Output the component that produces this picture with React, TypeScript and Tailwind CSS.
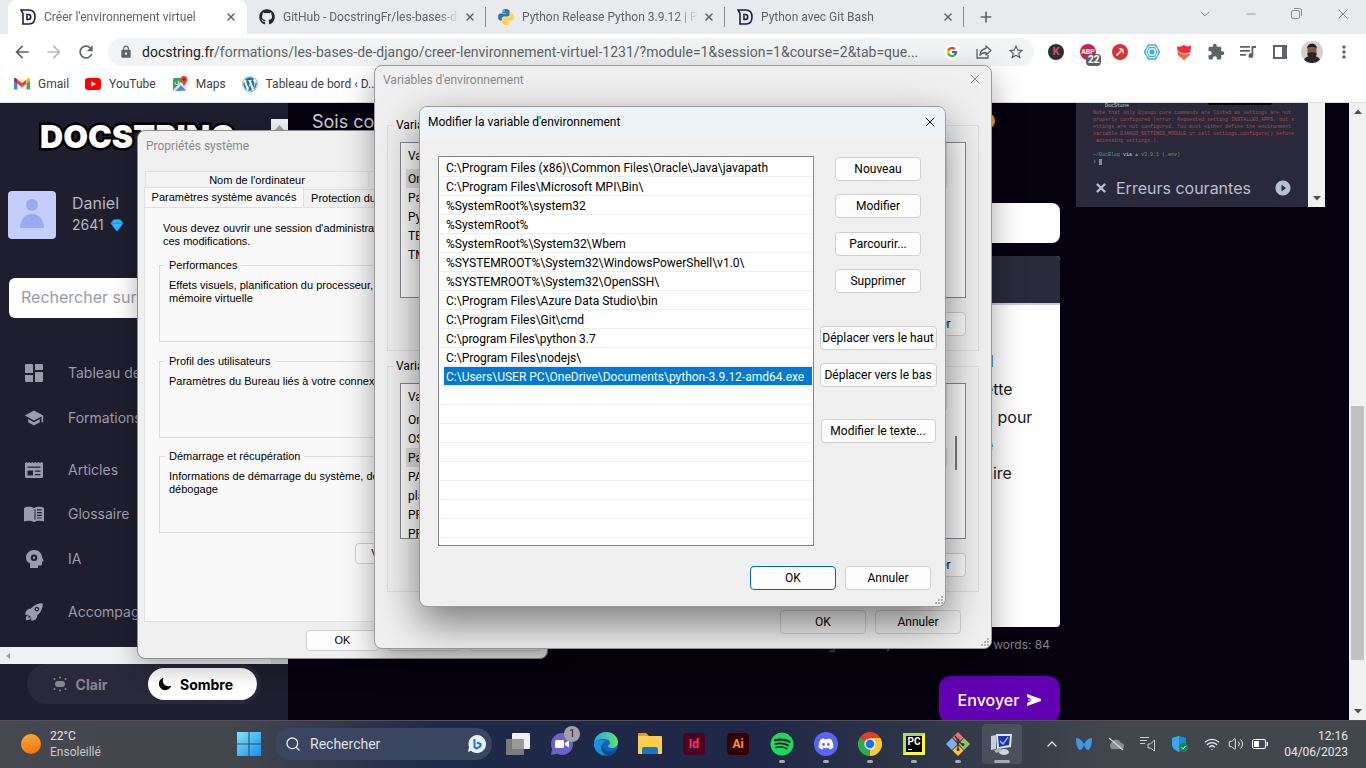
import React from "react";
import clsx from "clsx";
import { FcGoogle } from "react-icons/fc";
import { FaGithub, FaWordpress, FaSpotify, FaDiscord } from "react-icons/fa";
import {
  MdArrowBack,
  MdArrowForward,
  MdRefresh,
  MdLock,
  MdStarBorder,
  MdExtension,
  MdSchool,
  MdPlayCircleFilled,
  MdMoreVert,
} from "react-icons/md";
import { IoRocket, IoMoon } from "react-icons/io5";
import { Minus, Plus, Search, X, ChevronDown, ChevronUp, Wifi, Volume2, Gem } from "lucide-react";

type Tab = {
  title: string;
  icon: React.ReactNode;
  active?: boolean;
};

const pathEntries = [
  "C:\\Program Files (x86)\\Common Files\\Oracle\\Java\\javapath",
  "C:\\Program Files\\Microsoft MPI\\Bin\\",
  "%SystemRoot%\\system32",
  "%SystemRoot%",
  "%SystemRoot%\\System32\\Wbem",
  "%SYSTEMROOT%\\System32\\WindowsPowerShell\\v1.0\\",
  "%SYSTEMROOT%\\System32\\OpenSSH\\",
  "C:\\Program Files\\Azure Data Studio\\bin",
  "C:\\Program Files\\Git\\cmd",
  "C:\\program Files\\python 3.7",
  "C:\\Program Files\\nodejs\\",
  "C:\\Users\\USER PC\\OneDrive\\Documents\\python-3.9.12-amd64.exe",
];

const userVars = ["OneDrive", "Path", "PyCharm", "TEMP", "TMP"];
const systemVars = ["OnlineServices", "OS", "Path", "PATHEXT", "platformcode", "PROCESSOR_ARCHITECTURE", "PROCESSOR_IDENTIFIER"];

/* ---------- Small drawings ---------- */

function DocstringIcon() {
  return (
    <svg viewBox="0 0 16 16" className="h-4 w-4 shrink-0" fill="none" stroke="#221a4a" strokeWidth="1.6">
      <path d="M1 1h8c4 0 6 3 6 7s-2 7-6 7H3V4.500z" />
      <path d="M6 5.500h2.500c1.500 0 2.200 1 2.200 2.500s-.7 2.500-2.200 2.500H7V6.500" />
    </svg>
  );
}

function PythonIcon() {
  return (
    <svg viewBox="0 0 16 16" className="h-4 w-4 shrink-0">
      <path fill="#3776ab" d="M7.900 0C4.700 0 4.500 1.400 4.500 2.200v1.700h3.700v.6H2.600C1 4.500 0 5.700 0 8s1 3.500 2.300 3.500h1.500V9.600c0-1.200 1-2.200 2.200-2.200h3.800c1 0 1.800-.8 1.800-1.800V2.200C11.600 1 10.400 0 7.900 0zM6 1.300a.7.7 0 110 1.400.7.7 0 010-1.400z" />
      <path fill="#ffd43b" d="M8.100 16c3.200 0 3.400-1.400 3.400-2.200v-1.700H7.800v-.6h5.600C15 11.500 16 10.300 16 8s-1-3.500-2.300-3.500h-1.500v1.900c0 1.200-1 2.200-2.200 2.200H6.200c-1 0-1.800.8-1.800 1.800v3.400C4.400 15 5.600 16 8.100 16zm1.900-1.300a.7.7 0 110-1.400.7.7 0 010 1.400z" />
    </svg>
  );
}

function GmailIcon() {
  return (
    <svg viewBox="0 0 16 12" className="w-4 shrink-0">
      <path fill="#4285f4" d="M0 1.500V11.500h3.500V5z" />
      <path fill="#34a853" d="M16 1.500V11.500h-3.500V5z" />
      <path fill="#ea4335" d="M3.500 1.400L8 4.900l4.500-3.500V5.700L8 9.200 3.500 5.700z" />
      <path fill="#c5221f" d="M0 1.500C0 .2 1.400-.3 2.400.5l1.100.9v4.300L0 3z" />
      <path fill="#fbbc04" d="M16 1.500C16 .2 14.600-.3 13.600.5l-1.100.9v4.300L16 3z" />
    </svg>
  );
}

function YoutubeIcon() {
  return (
    <svg viewBox="0 0 16 12" className="w-4 shrink-0">
      <rect width="16" height="12" rx="3" fill="#f00" />
      <path d="M6.300 3.300v5.400L11 6z" fill="#fff" />
    </svg>
  );
}

function MapsIcon() {
  return (
    <svg viewBox="0 0 16 16" className="h-4 w-4 shrink-0">
      <rect x="1" y="2" width="13" height="13" rx="1.500" fill="#34a853" />
      <path d="M1 14L12 3l2 2v10H2z" fill="#dbe3e8" />
      <path d="M3.500 15L9 9.500l5 5z" fill="#4285f4" />
      <path d="M3 6.500a2 2 0 103-1.700" stroke="#fff" fill="none" />
      <path d="M12 0a3.500 3.500 0 00-3.500 3.500C8.500 6 11 7 12 10.500 13 7 15.500 6 15.500 3.500A3.500 3.500 0 0012 0z" fill="#ea4335" />
      <circle cx="12" cy="3.500" r="1.200" fill="#8c1d18" />
    </svg>
  );
}

function ShareIcon() {
  return (
    <svg viewBox="0 0 16 16" className="h-4 w-4" fill="none" stroke="#5f6368" strokeWidth="1.300">
      <path d="M1 5v9h11v-3" />
      <path d="M10 2l5 4.500-5 4.500V8.500C7 8.500 5.200 9.300 3.800 11.300 4.200 7.700 6.500 5 10 4.500z" strokeLinejoin="round" />
    </svg>
  );
}

function DashboardIcon({ className }: { className?: string }) {
  return (
    <svg viewBox="0 0 20 20" className={className} fill="currentColor">
      <path d="M2 1h6a1 1 0 011 1v8H1V2a1 1 0 011-1zM1 12h8v7H2a1 1 0 01-1-1zM11 1h7a1 1 0 011 1v5h-8zM11 9h8v9a1 1 0 01-1 1h-7z" />
    </svg>
  );
}

function ArticleIcon({ className }: { className?: string }) {
  return (
    <svg viewBox="0 0 20 20" className={className} fill="currentColor" fillRule="evenodd">
      <path d="M1 3l1.500-1L4 3l1.500-1L7 3l1.500-1L10 3l1.500-1L13 3l1.500-1L16 3l1.500-1L19 3v13.500a1.500 1.500 0 01-1.500 1.500h-15A1.500 1.500 0 011 16.500zM3.500 6.500v1.300h13V6.500zM3.500 10.500v5H9v-5zM11 10.500v1.300h5.500v-1.300zM11 14v1.300h5.500V14z" />
    </svg>
  );
}

function GlossaryIcon({ className }: { className?: string }) {
  return (
    <svg viewBox="0 0 20 20" className={className} fill="currentColor" fillRule="evenodd">
      <path d="M0 4c2.500-1.800 7-1.800 10 0 3-1.800 7.500-1.800 10 0v13.500c-2.500-1-7-1.200-10 .5-3-1.700-7.500-1.500-10-.5zM10.500 5.300v10.500h1V5zM13 5.300v1.200h4.800V5.300zM13 8v1.200h4.800V8zM13 10.700v1.200h4.800v-1.200zM13 13.400v1.200h4.800v-1.200z" />
    </svg>
  );
}

function HeadIcon({ className }: { className?: string }) {
  return (
    <svg viewBox="0 0 20 20" className={className} fill="currentColor" fillRule="evenodd">
      <path d="M10 1c5 0 8 3.500 8 7l1.500 3.500c.2.600-.2 1-.7 1H18V15a1.500 1.500 0 01-1.500 1.500H14V19H6v-4.500C3 13 2 11 2 8.500 2 4 6 1 10 1zM10 5.500a3.200 3.200 0 100 6.400 3.200 3.200 0 000-6.400zM10 7.500a1.200 1.200 0 110 2.400 1.200 1.200 0 010-2.400z" />
    </svg>
  );
}

function ResizeGrip() {
  return (
    <svg viewBox="0 0 8 8" className="absolute right-0.5 bottom-0.5 h-2 w-2" fill="#b4b4b4">
      <path d="M6 0h2v2H6zM3 3h2v2H3zM6 3h2v2H6zM0 6h2v2H0zM3 6h2v2H3zM6 6h2v2H6z" />
    </svg>
  );
}

/* ---------- Browser chrome ---------- */

const tabs: Tab[] = [
  { title: "Créer l'environnement virtuel", icon: <DocstringIcon />, active: true },
  { title: "GitHub - DocstringFr/les-bases-de-django", icon: <FaGithub className="h-4 w-4 shrink-0 text-[#24292f]" /> },
  { title: "Python Release Python 3.9.12 | Python.org", icon: <PythonIcon /> },
  { title: "Python avec Git Bash", icon: <DocstringIcon /> },
];

function TabStrip() {
  return (
    <div className="flex h-[34px] shrink-0 items-stretch bg-[#e8eaed] pl-2">
      {tabs.map((tab) => (
        <div
          key={tab.title}
          className={clsx(
            "flex w-[239px] items-center pr-2.5 pl-3 text-[#5f6368]",
            tab.active ? "rounded-t-lg bg-white" : "relative",
          )}
        >
          {tab.icon}
          <span className="ml-2 w-[176px] overflow-hidden [mask-image:linear-gradient(to_right,black_88%,transparent)] whitespace-nowrap">
            {tab.title}
          </span>
          <button type="button" aria-label="Fermer l'onglet" className="ml-auto">
            <X className="h-3 w-3" strokeWidth={3} />
          </button>
          {!tab.active && <span className="absolute top-[7px] right-0 h-5 w-px bg-[#85888c]" />}
        </div>
      ))}
      <button type="button" aria-label="Nouvel onglet" className="ml-3.5 text-[#5f6368]">
        <Plus className="h-4 w-4" strokeWidth={2.500} />
      </button>
      <div className="ml-auto flex items-center pb-1.5 text-[#8b8d90]">
        <button type="button" aria-label="Rechercher dans les onglets" className="flex w-[46px] justify-center">
          <ChevronDown className="h-4 w-4" strokeWidth={1.500} />
        </button>
        <button type="button" aria-label="Réduire" className="flex w-[46px] justify-center">
          <Minus className="h-4 w-3.5" strokeWidth={1.500} />
        </button>
        <button type="button" aria-label="Agrandir" className="flex w-[46px] justify-center">
          <svg viewBox="0 0 12 12" className="h-3 w-3" fill="none" stroke="currentColor">
            <rect x="0.500" y="2.500" width="8" height="8" rx="1.500" />
            <path d="M3 .5h5.500a2 2 0 012 2V8" />
          </svg>
        </button>
        <button type="button" aria-label="Fermer" className="flex w-[46px] justify-center">
          <X className="h-4 w-4" strokeWidth={1.500} />
        </button>
      </div>
    </div>
  );
}

function Extensions() {
  return (
    <div className="flex shrink-0 items-center pl-1.5 text-[#5f6368]">
      <span className="flex w-8 justify-center">
        <span className="flex h-4 w-4 items-center justify-center rounded-full bg-[#27313e] text-[11px] font-bold text-[#e0524e]">K</span>
      </span>
      <span className="relative flex w-8 justify-center">
        <span className="flex h-4 w-4 items-center justify-center rounded-full bg-[#d3203f] text-[7px] font-bold text-white">ABP</span>
        <span className="absolute top-2.5 left-3.5 rounded-sm bg-[#5b5e62] px-0.5 text-[10px] leading-3 font-bold text-white">22</span>
      </span>
      <span className="flex w-8 justify-center">
        <svg viewBox="0 0 16 16" className="h-4 w-4">
          <circle cx="8" cy="8" r="8" fill="#d93236" />
          <path d="M4.500 11.500L9 7" stroke="#fff" strokeWidth="1.700" />
          <path d="M6.500 4.500c2-.8 4.500 0 5 1.500.5 1.500.3 3-.3 4L9.500 6.500z" fill="#fff" />
        </svg>
      </span>
      <span className="flex w-8 justify-center">
        <svg viewBox="0 0 16 16" className="h-4 w-4" fill="none" stroke="#39afc4">
          <path d="M4.500 1h7L15.500 8l-4 7h-7L.5 8z" strokeWidth="1.300" />
          <path d="M5.500 3.500h5L13 8l-2.500 4.500h-5L3 8z" />
          <circle cx="8" cy="8" r="2" fill="#39afc4" />
          <path d="M0 8h16M4 1l8 14M12 1L4 15" strokeWidth=".6" />
        </svg>
      </span>
      <span className="flex w-8 justify-center">
        <svg viewBox="0 0 16 16" className="h-4 w-4">
          <path d="M1 2.500l3 .3L8 1l4 1.800 2.500-1.800.500 2-1 7.500L8 16l-6-5.500z" fill="#ee2f37" />
          <path d="M2 6.500c3 3.500 8 3.500 12 1.500l-.3 1.500c-4 2-8 1.500-11.500-1.500z" fill="#fff" opacity=".8" />
          <path d="M2.200 9c4 2.500 8 2.500 11.600 1L8 16z" fill="#fb6a2c" />
        </svg>
      </span>
      <button type="button" aria-label="Extensions" className="flex w-8 justify-center">
        <MdExtension className="h-[18px] w-[18px]" />
      </button>
      <button type="button" aria-label="Contrôles multimédias" className="flex w-8 justify-center">
        <svg viewBox="0 0 16 14" className="h-3.5 w-4" fill="currentColor">
          <path d="M0 1h10v1.700H0zM0 5h10v1.700H0zM0 9h6v1.700H0z" />
          <path d="M11.500 1H16v2h-2.700v7.500a2.400 2.400 0 11-1.800-2.300z" />
        </svg>
      </button>
      <button type="button" aria-label="Panneau latéral" className="flex w-8 justify-center">
        <span className="h-3.5 w-3.5 border-2 border-r-[5px] border-[#5f6368]" />
      </button>
      <button type="button" aria-label="Profil" className="flex w-8 justify-center">
        <svg viewBox="0 0 22 22" className="h-[22px] w-[22px] rounded-full bg-[#d5cfcd]">
          <path d="M2 22c1-6 4-7 9-7s8 1 9 7z" fill="#2b272b" />
          <path d="M6.500 8c0-5 9-5 9 0v4c0 3-2 6-4.500 6s-4.500-3-4.500-6z" fill="#7d5a4c" />
          <path d="M6 8c0-7 10-7 10 0-1-3-9-3-10 0z" fill="#211b1d" />
          <path d="M6.500 12c2-1 7-1 9 0v1c0 3-2 5.500-4.500 5.500S6.500 16 6.500 13z" fill="#2e2221" />
        </svg>
      </button>
      <button type="button" aria-label="Menu" className="flex w-8 justify-center">
        <MdMoreVert className="h-5 w-5" />
      </button>
    </div>
  );
}

function Toolbar() {
  return (
    <div className="flex h-9 shrink-0 items-center bg-white px-1.5 text-[#5f6368]">
      <button type="button" aria-label="Retour" className="flex w-8 justify-center">
        <MdArrowBack className="h-5 w-5" />
      </button>
      <button type="button" aria-label="Avancer" className="flex w-8 justify-center text-[#b9bbbe]">
        <MdArrowForward className="h-5 w-5" />
      </button>
      <button type="button" aria-label="Actualiser" className="flex w-8 justify-center">
        <MdRefresh className="h-5 w-5" />
      </button>
      <div className="ml-1.5 flex h-7 min-w-0 flex-1 items-center rounded-full bg-[#f1f3f4] pr-0.5 pl-[11px] text-[14px]">
        <MdLock className="h-3.5 w-3.5 shrink-0" />
        <label htmlFor="url" className="ml-[9px] text-[#202124]">docstring.fr</label>
        <input
          id="url"
          readOnly
          value="/formations/les-bases-de-django/creer-lenvironnement-virtuel-1231/?module=1&session=1&course=2&tab=que..."
          className="min-w-0 flex-1 bg-transparent text-ellipsis outline-none"
        />
        <button type="button" aria-label="Google" className="flex w-8 justify-center">
          <span className="rounded-full bg-white p-0.5"><FcGoogle className="h-3 w-3" /></span>
        </button>
        <button type="button" aria-label="Partager" className="flex w-8 justify-center"><ShareIcon /></button>
        <button type="button" aria-label="Ajouter aux favoris" className="flex w-8 justify-center">
          <MdStarBorder className="h-[18px] w-[18px]" />
        </button>
      </div>
      <Extensions />
    </div>
  );
}

function Bookmarks() {
  return (
    <nav className="flex h-[33px] shrink-0 items-center gap-4 border-b border-[#dcdde0] bg-white pb-1 pl-3.5 text-[#3c4043]">
      <a href="#gmail" className="flex items-center gap-2"><GmailIcon />Gmail</a>
      <a href="#youtube" className="flex items-center gap-2"><YoutubeIcon />YouTube</a>
      <a href="#maps" className="flex items-center gap-2"><MapsIcon />Maps</a>
      <a href="#bord" className="flex items-center gap-2"><FaWordpress className="h-4 w-4 text-[#21759b]" />Tableau de bord ‹ D...</a>
    </nav>
  );
}

/* ---------- Web page ---------- */

const menu = [
  { label: "Tableau de bord", icon: DashboardIcon, className: "h-[45px]" },
  { label: "Formations", icon: MdSchool, className: "h-[45px]" },
  { label: "Articles", icon: ArticleIcon, className: "h-[59px]" },
  { label: "Glossaire", icon: GlossaryIcon, className: "h-[29px]" },
  { label: "IA", icon: HeadIcon, className: "h-[61px]" },
  { label: "Accompagnement", icon: IoRocket, className: "h-[45px]" },
];

function Sidebar() {
  return (
    <aside className="flex w-72 shrink-0 flex-col bg-[#1f1e2e] font-[Inter,sans-serif] text-[#b5b7c2]">
      <div className="mt-4 flex min-h-0 flex-1">
        <div className="min-w-0 flex-1 overflow-hidden">
          <div className="pl-10 text-[32px] leading-9 font-black text-white [-webkit-text-stroke:5px_black] [paint-order:stroke_fill]">
            DOCSTRING
          </div>
          <div className="mt-9 flex pl-2">
            <div className="h-12 w-12 rounded bg-[#c3cffa]">
              <svg viewBox="0 0 48 48">
                <circle cx="24" cy="14" r="6" fill="#97abee" />
                <path d="M12 37c0-8 5-14 12-14s12 6 12 14z" fill="#97abee" />
              </svg>
            </div>
            <div className="ml-4">
              <p className="text-[16px] leading-6">Daniel</p>
              <p className="flex items-center gap-1.5 text-[14px] leading-5">
                2641 <Gem className="h-3.5 w-3.5 fill-[#35b8f5] text-[#1b87d8]" strokeWidth={1.500} />
              </p>
            </div>
          </div>
          <input
            type="search"
            aria-label="Rechercher"
            placeholder="Rechercher sur Docstring"
            className="mt-[39px] ml-[9px] h-10 w-[250px] rounded-md bg-white px-3 pb-0.5 text-[16px] placeholder:text-[#9a9ba3]"
          />
          <nav className="mt-8 text-[14px] text-[#9a9cab]">
            {menu.map(({ label, icon: Icon, className }) => (
              <a key={label} href={"#" + label} className={clsx("flex items-center whitespace-nowrap", className)}>
                <Icon className="ml-6 h-5 w-5 shrink-0" />
                <span className="ml-6">{label}</span>
              </a>
            ))}
          </nav>
        </div>
        <div className="w-[17px] bg-[#f1f1f1] pt-1.5">
          <svg viewBox="0 0 17 5" className="h-[5px] w-full" fill="#a3a3a3"><path d="M4 5l4.500-5L13 5z" /></svg>
        </div>
      </div>
      <div className="flex h-[17px] shrink-0 items-center bg-[#f1f1f1]">
        <svg viewBox="0 0 5 8" className="ml-1.5 h-2 w-1" fill="#a3a3a3"><path d="M5 0v8L0 4z" /></svg>
        <span className="ml-auto h-full w-[17px] bg-[#dcdcdc]" />
      </div>
      <div className="h-14 shrink-0">
        <div className="ml-[27px] flex h-10 w-[234px] items-center rounded-full bg-[#2a293c] pr-1 text-[14px] font-bold">
          <button type="button" className="flex flex-1 items-center justify-center gap-2 pr-4 text-[#88878f]">
            <svg viewBox="0 0 16 16" className="h-4 w-4" fill="#88878f">
              <rect x="3" y="5" width="10" height="6" rx="3" />
              <circle cx="8" cy="1.500" r="1" /><circle cx="8" cy="14.500" r="1" />
              <circle cx="2.500" cy="3" r="1" /><circle cx="13.500" cy="3" r="1" />
              <circle cx="2.500" cy="13" r="1" /><circle cx="13.500" cy="13" r="1" />
            </svg>
            Clair
          </button>
          <button type="button" className="flex h-8 w-[109px] items-center gap-2 rounded-full bg-white pl-2.5 text-black">
            <IoMoon className="h-3.5 w-3.5" />
            Sombre
          </button>
        </div>
      </div>
    </aside>
  );
}

function MainContent() {
  return (
    <main className="flex min-w-0 flex-1 gap-4 bg-[#06010f] px-6 font-[Inter,sans-serif]">
      <div className="flex min-w-0 flex-1 flex-col">
        <p className="flex h-9 w-[683px] shrink-0 items-center justify-between text-[18px] text-[#d0d1d8]">
          Sois concis dans ta question
          <svg viewBox="0 0 18 18" className="h-4 w-4"><circle cx="9" cy="9" r="9" fill="#f5a623" /><path d="M5 11c2 3 6 3 8 0" stroke="#5b3310" fill="none" /></svg>
        </p>
        <input aria-label="Titre" className="mt-16 h-10 shrink-0 rounded-lg bg-white px-4" />
        <div className="mt-[13px] flex h-[371px] shrink-0 flex-col overflow-hidden rounded bg-white">
          <div className="h-[49px] border-b-2 border-[#c9ccdd] bg-[#2b2a3c]" />
          <div className="pt-[42px] pl-[672px] text-[16px] leading-7 whitespace-nowrap text-[#1c1b22]">
            <p className="text-[#2b6a80]">d</p>
            <p>ette</p>
            <p>à pour</p>
            <p className="text-[#2b6a80]">e</p>
            <p>aire</p>
          </div>
        </div>
        <div className="mt-2 flex justify-end gap-3 pr-2.5 text-[12px] leading-5 text-[#84848d]">
          <span>Sauvegardé: 04 juin 2023 à 12:15</span>
          <span>words: 84</span>
        </div>
        <button type="button" className="mt-[21px] flex h-12 w-[121px] shrink-0 items-center justify-center gap-2 self-end rounded-xl bg-[#6200b3] text-[16px] font-medium text-white">
          Envoyer
          <svg viewBox="0 0 14 12" className="h-3 w-3.5" fill="#fff"><path d="M0 0l14 5v2L0 12V9l5-2.500H1v-1h4L0 3z" /></svg>
        </button>
      </div>

      {/* Video card */}
      <div className="flex h-[104px] w-[249px] shrink-0">
        <div className="relative flex flex-1 flex-col overflow-hidden bg-[#2a293c]">
          <span className="absolute top-0 right-9 h-0.5 w-16 rounded-b bg-black" />
          <pre className="pl-[17px] font-['Liberation_Mono',monospace] text-[5px] leading-[7px] text-[#b0484e]">
            <span className="pl-3 text-[#c9cad4]">DocStone</span>{"\n"}
            {"Note that only Django core commands are listed as settings are not\n"}
            {"properly configured (error: Requested setting INSTALLED_APPS, but s\n"}
            {"ettings are not configured. You must either define the environment\n"}
            {"variable DJANGO_SETTINGS_MODULE or call settings.configure() before\n"}
            {" accessing settings.).\n\n"}
            <span className="text-[#3f9aa8]">~/DocBlog</span> <span className="text-[#c9cad4]">via</span> <span className="text-[#87923f]">▲ v3.9.1 (.env)</span>{"\n"}
            <span className="text-[#5d9a4a]">❯</span> <span className="bg-[#8b8c99] text-[#8b8c99]">_</span>
          </pre>
          <div className="mt-auto mb-[7px] flex h-6 items-center pr-4 pl-[18px] text-[16px] text-[#b8bfd3]">
            <X className="h-3.5 w-3.5" strokeWidth={4} />
            <span className="ml-2">Erreurs courantes</span>
            <MdPlayCircleFilled className="ml-auto h-[18px] w-[18px]" />
          </div>
        </div>
        <div className="flex w-[17px] flex-col justify-end bg-[#f1f1f1] pb-1.5">
          <svg viewBox="0 0 17 5" className="h-[5px] w-full" fill="#505050"><path d="M5 0h8L9 4.500z" /></svg>
        </div>
      </div>
    </main>
  );
}

function PageScrollbar() {
  return (
    <div className="flex w-[17px] shrink-0 flex-col bg-[#f1f1f1] py-1.5">
      <svg viewBox="0 0 17 5" className="h-[5px] w-full" fill="#505050"><path d="M5 5h8L9 .5z" /></svg>
      <span className="mx-0.5 mt-auto mb-[49px] h-[254px] bg-[#c1c1c1]" />
      <svg viewBox="0 0 17 5" className="h-[5px] w-full" fill="#505050"><path d="M5 0h8L9 4.500z" /></svg>
    </div>
  );
}

/* ---------- Dialogs ---------- */

function DialogButton({ children, className, primary }: { children: React.ReactNode; className?: string; primary?: boolean }) {
  return (
    <button
      type="button"
      className={clsx(
        "rounded border text-center whitespace-nowrap",
        primary ? "border-[#0067c0]" : "border-[#cfcfcf]",
        className,
      )}
    >
      {children}
    </button>
  );
}

function SystemProperties() {
  return (
    <section className="absolute top-[130px] left-[137px] flex h-[529px] w-[411px] flex-col rounded-lg border border-[#8e8e92] bg-[#f0f0f0] px-1.5 font-['Liberation_Sans',sans-serif] text-[11px] leading-[13px] text-black shadow-[0_8px_24px_rgba(0,0,0,0.3)]">
      <h2 className="h-10 shrink-0 pt-1.5 pl-0.5 font-[Roboto,sans-serif] text-[12px] leading-[18px] text-[#8a8a8a]">Propriétés système</h2>
      <div className="flex h-4 shrink-0 pl-px">
        <button type="button" className="w-[224px] border border-b-0 border-[#e0e0e0] bg-[#f3f3f3] pt-0.5">Nom de l'ordinateur</button>
        <button type="button" className="flex-1 border border-b-0 border-l-0 border-[#e0e0e0] bg-[#f3f3f3] pt-0.5">Matériel</button>
      </div>
      <div className="flex h-5 shrink-0 items-end">
        <button type="button" className="h-full w-[160px] border border-b-0 border-[#e0e0e0] bg-[#f9f9f9]">Paramètres système avancés</button>
        <button type="button" className="h-[18px] w-[124px] border border-b-0 border-l-0 border-[#e0e0e0] bg-[#f3f3f3]">Protection du système</button>
        <button type="button" className="h-[18px] flex-1 border border-b-0 border-l-0 border-[#e0e0e0] bg-[#f3f3f3]">Utilisation à distance</button>
      </div>
      <div className="flex h-[415px] shrink-0 flex-col border border-[#e0e0e0] bg-[#f9f9f9] px-3.5 pt-3.5">
        <p className="pl-1 whitespace-nowrap">
          Vous devez ouvrir une session d'administrateur pour effectuer la plupart de<br />ces modifications.
        </p>
        <fieldset className="mt-[11px] h-[83px] shrink-0 border border-[#dcdcdc] pl-[9px]">
          <legend className="-ml-1 px-1">Performances</legend>
          <p className="mt-[7px]">Effets visuels, planification du processeur, utilisation de la mémoire et mémoire virtuelle</p>
        </fieldset>
        <fieldset className="mt-[13px] h-[83px] shrink-0 border border-[#dcdcdc] pl-[9px]">
          <legend className="-ml-1 px-1">Profil des utilisateurs</legend>
          <p className="mt-[7px]">Paramètres du Bureau liés à votre connexion</p>
        </fieldset>
        <fieldset className="mt-[12px] h-[83px] shrink-0 border border-[#dcdcdc] pl-[9px]">
          <legend className="-ml-1 px-1">Démarrage et récupération</legend>
          <p className="mt-[7px]">Informations de démarrage du système, de défaillance du système et de débogage</p>
        </fieldset>
        <DialogButton className="mt-2.5 h-[21px] w-[171px] self-end bg-[#fdfdfd]">Variables d'environnement...</DialogButton>
      </div>
      <div className="mt-2 flex justify-end gap-2">
        <DialogButton className="h-[21px] w-[73px] bg-[#fdfdfd]">OK</DialogButton>
        <DialogButton className="h-[21px] w-[73px] bg-[#fdfdfd]">Annuler</DialogButton>
        <DialogButton className="h-[21px] w-[73px] bg-[#fdfdfd]">Appliquer</DialogButton>
      </div>
    </section>
  );
}

function VariableGroup({ legend, rows, selected, scroll }: { legend: string; rows: string[]; selected: number; scroll?: boolean }) {
  return (
    <fieldset className="h-[234px] border border-[#dcdcdc] px-3">
      <legend className="-ml-1.5 px-0.5 leading-4">{legend}</legend>
      <div className="mt-[9px] flex h-[156px] overflow-hidden border border-[#828790] bg-white pl-[5px]">
        <table className="flex-1 self-start text-left">
          <thead>
            <tr className="h-[26px]">
              <th className="w-48 pl-0.5 font-normal">Variable</th>
              <th className="border-r border-[#e5e5e5] font-normal">Valeur</th>
            </tr>
          </thead>
          <tbody>
            {rows.map((row, i) => (
              <tr key={row} className={clsx("h-[19px] leading-[18px]", i === selected && "bg-[#e4e4e4]")}>
                <td className="pl-0.5">{row}</td>
                <td />
              </tr>
            ))}
          </tbody>
        </table>
        <div className="flex w-[18px] items-start justify-center pt-[52px]">
          {scroll && <span className="h-[34px] w-0.5 bg-[#808080]" />}
        </div>
      </div>
      <div className="mt-3.5 flex justify-end gap-2">
        <DialogButton className="h-6 w-[86px] bg-[#fdfdfd]">Nouvelle...</DialogButton>
        <DialogButton className="h-6 w-[86px] bg-[#fdfdfd]">Modifier...</DialogButton>
        <DialogButton className="h-6 w-[86px] bg-[#fdfdfd]">Supprimer</DialogButton>
      </div>
    </fieldset>
  );
}

function EnvironmentVariables() {
  return (
    <section className="absolute top-[65px] left-[374px] h-[584px] w-[618px] rounded-lg border border-[#9a9a9e] bg-[#f0f0f0] px-3 text-black shadow-[0_12px_32px_rgba(0,0,0,0.35)]">
      <header className="flex h-[51px] items-start justify-between pt-[5px] text-[#8a8a8a]">
        <h2 className="-ml-1 leading-[18px]">Variables d'environnement</h2>
        <button type="button" aria-label="Fermer" className="-mr-1"><X className="h-4 w-4" strokeWidth={1.500} /></button>
      </header>
      <div className="flex flex-col gap-[7px]">
        <VariableGroup legend="Variables utilisateur pour USER PC" rows={userVars} selected={0} />
        <VariableGroup legend="Variables système" rows={systemVars} selected={2} scroll />
      </div>
      <div className="mt-[18px] flex justify-end gap-[9px] pr-[18px]">
        <DialogButton className="h-6 w-[86px]">OK</DialogButton>
        <DialogButton className="h-6 w-[86px]">Annuler</DialogButton>
      </div>
      <ResizeGrip />
    </section>
  );
}

function EditVariable() {
  return (
    <section className="absolute top-[106px] left-[419px] flex h-[501px] w-[527px] flex-col overflow-hidden rounded-lg border border-[#9a9a9e] bg-[#f0f0f0] text-black shadow-[0_16px_40px_rgba(0,0,0,0.5)]">
      <header className="flex h-[30px] shrink-0 items-center justify-between bg-[#eef3f9] pr-[7px] pl-2">
        <h2>Modifier la variable d'environnement</h2>
        <button type="button" aria-label="Fermer"><X className="h-4 w-4" strokeWidth={1.500} /></button>
      </header>
      <div className="mt-[19px] flex pl-[18px]">
        <ul className="h-[390px] w-[376px] overflow-hidden border border-[#828790] bg-white px-px">
          {Array.from({ length: 20 }).map((_, i) => (
            <li key={i} className={clsx("h-[19px] border-b border-[#ededed] pl-1 leading-5 whitespace-nowrap", i === 0 && "mt-px")}>
              <span className={clsx("block h-[18px] pl-0.5", i === pathEntries.length - 1 && "bg-[#0078d7] text-white")}>{pathEntries[i]}</span>
            </li>
          ))}
        </ul>
        <div className="flex flex-1 flex-col items-center pt-px pr-[3px]">
          <DialogButton className="h-6 w-[86px] bg-[#fdfdfd]">Nouveau</DialogButton>
          <DialogButton className="mt-[13px] h-6 w-[86px] bg-[#fdfdfd]">Modifier</DialogButton>
          <DialogButton className="mt-[14px] h-6 w-[86px] bg-[#fdfdfd]">Parcourir...</DialogButton>
          <DialogButton className="mt-[13px] h-6 w-[86px] bg-[#fdfdfd]">Supprimer</DialogButton>
          <DialogButton className="mt-[33px] h-6 w-[117px] bg-[#fdfdfd]">Déplacer vers le haut</DialogButton>
          <DialogButton className="mt-[13px] h-6 w-[117px] bg-[#fdfdfd]">Déplacer vers le bas</DialogButton>
          <DialogButton className="mt-8 h-6 w-[115px] bg-[#fdfdfd]">Modifier le texte...</DialogButton>
        </div>
      </div>
      <div className="mt-5 flex justify-end gap-[9px] pr-3.5">
        <DialogButton primary className="h-6 w-[86px] bg-[#fdfdfd]">OK</DialogButton>
        <DialogButton className="h-6 w-[86px] bg-[#fdfdfd]">Annuler</DialogButton>
      </div>
      <ResizeGrip />
    </section>
  );
}

/* ---------- Taskbar ---------- */

function TaskIcon({ label, running, active, children }: { label: string; running?: boolean; active?: boolean; children: React.ReactNode }) {
  return (
    <button type="button" aria-label={label} className="relative flex h-12 w-11 shrink-0 items-center justify-center">
      {active && <span className="absolute inset-x-0.5 inset-y-1 rounded bg-white/10" />}
      <span className="relative">{children}</span>
      {running && <span className={clsx("absolute bottom-[5px] h-[3px] rounded-full bg-[#a5a9b2]", active ? "w-4" : "w-1.5")} />}
    </button>
  );
}

function Taskbar() {
  return (
    <footer className="flex h-12 shrink-0 items-center bg-[linear-gradient(to_right,#45484d_0%,#42464d_17%,#1f2a48_32%,#1e2746_55%,#343b49_72%,#42474d_82%,#42474d_100%)] text-[#e8e9ec] shadow-[inset_0_1px_#55515f]">
      <div className="flex w-[227px] shrink-0 items-center pl-[21px]">
        <span className="h-5 w-5 rounded-full bg-[linear-gradient(160deg,#fbb034,#f0690f)]" />
        <div className="ml-[9px] leading-4">
          <p>22°C</p>
          <p className="text-[#c6c8cc]">Ensoleillé</p>
        </div>
      </div>
      <TaskIcon label="Démarrer">
        <svg viewBox="0 0 24 24" className="h-6 w-6">
          <defs>
            <linearGradient id="win" x1="0" y1="0" x2="1" y2="1"><stop stopColor="#7fe3fb" /><stop offset="1" stopColor="#1190ee" /></linearGradient>
          </defs>
          <path fill="url(#win)" d="M0 0h11.500v11.500H0zM12.500 0H24v11.500H12.500zM0 12.500h11.500V24H0zM12.500 12.500H24V24H12.500z" />
        </svg>
      </TaskIcon>
      <label className="mx-1 flex h-8 w-[217px] shrink-0 items-center rounded-full bg-[#3a4560] pr-1.5 pl-2.5">
        <Search className="h-4 w-4 shrink-0" />
        <input
          aria-label="Rechercher"
          placeholder="Rechercher"
          className="ml-[9px] min-w-0 flex-1 bg-transparent text-[14px] outline-none placeholder:text-[#dfe1e6]"
        />
        <svg viewBox="0 0 18 18" className="h-[18px] w-[18px] shrink-0">
          <path d="M9 0a9 9 0 11-6 15.700L0 17l1-5A9 9 0 019 0z" fill="#e8f4ff" />
          <path d="M6.500 4v8l2 1.500 4-2.300V9L9 7.500" fill="none" stroke="#1673e0" strokeWidth="2" />
        </svg>
      </label>
      <TaskIcon label="Vue des tâches">
        <svg viewBox="0 0 24 24" className="h-6 w-6">
          <rect x="6" y="1" width="18" height="16" rx="1" fill="#f0f0f0" />
          <rect x="0" y="7" width="18" height="16" rx="1" fill="#8a8a8a" opacity=".85" />
        </svg>
      </TaskIcon>
      <TaskIcon label="Conversation">
        <svg viewBox="0 0 24 24" className="h-6 w-6">
          <path d="M12 1a11 11 0 11-5 20.800L1 23l1.200-6A11 11 0 0112 1z" fill="#6a62c8" />
          <rect x="5" y="8" width="9" height="8" rx="1.500" fill="#fff" />
          <path d="M15 11l4-2.500v7L15 13z" fill="#fff" />
        </svg>
        <span className="absolute -top-1.5 -right-1.5 flex h-4 w-4 items-center justify-center rounded-full bg-[#a0a2a8] text-[11px] text-[#20242e]">1</span>
      </TaskIcon>
      <TaskIcon label="Edge">
        <svg viewBox="0 0 24 24" className="h-6 w-6">
          <defs>
            <linearGradient id="edge" x1="0" y1="0" x2="1" y2="0"><stop stopColor="#2aa5e8" /><stop offset="1" stopColor="#5fe06b" /></linearGradient>
          </defs>
          <circle cx="12" cy="12" r="12" fill="#1466b8" />
          <path d="M0 11C1 4 6 0 12 0c7 0 12 5 12 10 0 4-3 6-6 6s-4-1-4-2 2-1 2-3.500S13 7 9 7c-4 0-7 2-9 4z" fill="url(#edge)" />
          <path d="M9 11c-3 3-3 9 3 12C4 23 0 18 0 12c2-4 8-5 12-3-1 0-2 1-3 2z" fill="#1b8fdc" />
          <path d="M9 12c-1 5 4 9 11 7l2-1c-2 3-5 5-8 6-6-2-8-8-5-12z" fill="#0c4a92" />
        </svg>
      </TaskIcon>
      <TaskIcon label="Explorateur de fichiers">
        <svg viewBox="0 0 24 24" className="h-6 w-6">
          <path d="M0 2a1 1 0 011-1h7l3 3v4H0z" fill="#e5a00d" />
          <rect y="4" width="24" height="18" rx="1" fill="#fccf4d" />
          <path d="M4 22v-5a2 2 0 012-2h12a2 2 0 012 2v5z" fill="#1577c9" />
        </svg>
      </TaskIcon>
      <TaskIcon label="InDesign">
        <span className="flex h-[22px] w-[22px] items-center justify-center rounded bg-[#49021f] text-[12px] font-bold text-[#ff3366]">Id</span>
      </TaskIcon>
      <TaskIcon label="Illustrator">
        <span className="flex h-[22px] w-[22px] items-center justify-center rounded bg-[#330000] text-[12px] font-bold text-[#ff9a00]">Ai</span>
      </TaskIcon>
      <TaskIcon label="Spotify" running>
        <FaSpotify className="h-6 w-6 rounded-full bg-[#101820] text-[#1ed760]" />
      </TaskIcon>
      <TaskIcon label="Discord" running>
        <span className="flex h-6 w-6 items-center justify-center rounded-full bg-[#5865f2]"><FaDiscord className="h-4 w-4 text-white" /></span>
      </TaskIcon>
      <TaskIcon label="Chrome" running>
        <svg viewBox="0 0 24 24" className="h-6 w-6">
          <path d="M12 12L1.600 6A12 12 0 0122.400 6z" fill="#e33b2e" />
          <path d="M12 12L22.400 6A12 12 0 0112 24z" fill="#fcc934" />
          <path d="M12 12v12A12 12 0 011.600 6z" fill="#2da94f" />
          <path d="M12 6h10.400L17 15z" fill="#fcc934" />
          <path d="M7 15L1.600 6 12 12z" fill="#2da94f" />
          <circle cx="12" cy="12" r="5.600" fill="#fff" />
          <circle cx="12" cy="12" r="4.400" fill="#1a73e8" />
        </svg>
      </TaskIcon>
      <TaskIcon label="PyCharm" running>
        <span className="flex h-[22px] w-[22px] flex-col items-center border-[3px] border-t-[#9be05a] border-r-[#fcf84a] border-b-[#fcf84a] border-l-[#b6e63e] bg-black text-[10px] leading-[11px] font-bold text-white">
          PC
          <span className="mt-0.5 mr-2 h-px w-1 bg-white" />
        </span>
      </TaskIcon>
      <TaskIcon label="Git Bash" running>
        <svg viewBox="0 0 24 24" className="h-6 w-6">
          <path d="M12 0l5.500 5.500L12 11 6.500 5.500z" fill="#e8716b" />
          <path d="M6 6l5.500 6L6 18 0 12z" fill="#7db1f0" />
          <path d="M18 6l6 6-6 6-5.500-6z" fill="#8fc46a" />
          <path d="M12 13l5.500 5.500L12 24l-5.500-5.500z" fill="#f5c542" />
          <path d="M9 4l3 4v10M12 9l5 4" stroke="#4b2a22" strokeWidth="1.300" fill="none" />
          <circle cx="12" cy="8" r="1.500" fill="#4b2a22" /><circle cx="12" cy="17.500" r="1.500" fill="#4b2a22" /><circle cx="17" cy="12.500" r="1.500" fill="#4b2a22" />
        </svg>
      </TaskIcon>
      <TaskIcon label="Propriétés système" running active>
        <svg viewBox="0 0 24 24" className="h-6 w-6">
          <path d="M1 4l5-1v14l-5 1z" fill="#c8d0da" />
          <path d="M6 2h16l-1 13-14 2z" fill="#dfe5ee" />
          <path d="M8 4h12l-1 9-10 2z" fill="#1733b8" />
          <path d="M10 9l3 3 5-7" stroke="#b9c8ff" strokeWidth="1.200" fill="none" />
          <ellipse cx="14" cy="20" rx="5" ry="3" fill="#d3d7dc" />
          <path d="M4 18l7-2 1 3-6 2z" fill="#aab2bf" />
        </svg>
      </TaskIcon>

      {/* System tray */}
      <div className="ml-auto flex shrink-0 items-center pr-[18px]">
        <button type="button" aria-label="Afficher les icônes cachées" className="flex w-8 justify-center"><ChevronUp className="h-4 w-4" /></button>
        <span className="flex w-8 justify-center">
          <svg viewBox="0 0 16 14" className="h-3.5 w-4"><path d="M0 1c4 0 6 3 8 6 2-3 4-6 8-6 0 5-1 11-4 12-2 0-3-3-4-5-1 2-2 5-4 5C1 12 0 6 0 1z" fill="#3f97e8" /></svg>
        </span>
        <span className="flex w-8 justify-center">
          <svg viewBox="0 0 16 14" className="h-3.5 w-4">
            <path d="M4 12a4 4 0 010-7 5 5 0 019 1 3 3 0 010 6z" fill="#8b8f94" />
            <path d="M1 1l14 12" stroke="#d6d7da" strokeWidth="1.300" />
          </svg>
        </span>
        <span className="flex w-8 justify-center">
          <svg viewBox="0 0 16 16" className="h-4 w-4" fill="none" stroke="#c8cacf">
            <path d="M0 1.500h9M0 4.500h7M0 7.500h5" />
            <path d="M8 8v4h2.500l4 3V4l-4 4z" />
          </svg>
        </span>
        <span className="flex w-8 justify-center">
          <svg viewBox="0 0 16 16" className="h-4 w-4">
            <path d="M7 0l7 2v6c0 4-3 6-7 8-4-2-7-4-7-8V2z" fill="#1b8be0" />
            <path d="M7 0v16c-4-2-7-4-7-8V2z" fill="#3aa7ee" />
            <circle cx="11.500" cy="11.500" r="4.500" fill="#128a43" />
            <path d="M9.500 11.500l1.500 1.500 2.500-3" stroke="#fff" fill="none" />
          </svg>
        </span>
        <button type="button" aria-label="Réseau, volume et batterie" className="flex items-center gap-2 pl-2">
          <Wifi className="h-4 w-4" />
          <Volume2 className="h-4 w-4" strokeWidth={1.500} />
          <svg viewBox="0 0 16 10" className="h-2.5 w-4">
            <rect x=".5" y=".5" width="13" height="9" rx="1.500" fill="none" stroke="#fff" />
            <rect x="2" y="2" width="5" height="6" fill="#fff" />
            <rect x="14.500" y="3" width="1.500" height="4" fill="#fff" />
          </svg>
        </button>
        <div className="w-20 text-right leading-4">
          <p>12:16</p>
          <p>04/06/2023</p>
        </div>
      </div>
    </footer>
  );
}

export default function App() {
  return (
    <div className="relative flex h-screen flex-col overflow-hidden font-[Roboto,sans-serif] text-[12px]">
      <TabStrip />
      <Toolbar />
      <Bookmarks />
      <div className="flex min-h-0 flex-1 overflow-hidden">
        <Sidebar />
        <MainContent />
        <PageScrollbar />
      </div>
      <Taskbar />
      <SystemProperties />
      <EnvironmentVariables />
      <EditVariable />
    </div>
  );
}
